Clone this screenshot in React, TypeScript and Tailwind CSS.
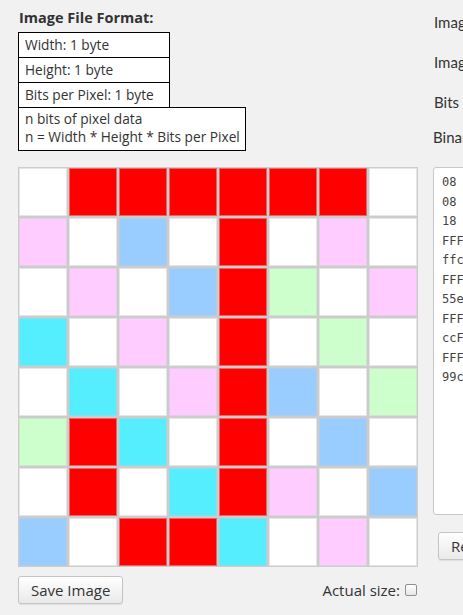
import React from "react";

type Cell = "W" | "R" | "P" | "B" | "C" | "G";

// pixel rows, as drawn in the editor
const rows: Cell[][] = [
  ["W", "R", "R", "R", "R", "R", "R", "W"],
  ["P", "W", "B", "W", "R", "W", "P", "W"],
  ["W", "P", "W", "B", "R", "G", "W", "P"],
  ["C", "W", "P", "W", "R", "W", "G", "W"],
  ["W", "C", "W", "P", "R", "B", "W", "G"],
  ["G", "R", "C", "W", "R", "W", "B", "W"],
  ["W", "R", "W", "C", "R", "P", "W", "B"],
  ["B", "W", "R", "R", "C", "W", "P", "W"],
];

const cellClass: Record<Cell, string> = {
  W: "bg-white",
  R: "bg-[#ff0000]",
  P: "bg-[#ffccff]",
  B: "bg-[#99ccff]",
  C: "bg-[#55eeff]",
  G: "bg-[#ccffcc]",
};

const hex: Record<Cell, string> = {
  W: "FFFFFF",
  R: "FF0000",
  P: "ffccff",
  B: "99ccff",
  C: "55eeff",
  G: "ccFFcc",
};

const binaryLines = ["08", "08", "18", ...rows.map((r) => r.map((c) => hex[c]).join(""))];

const formatRows = ["Width: 1 byte", "Height: 1 byte", "Bits per Pixel: 1 byte"];

const buttonClass =
  "h-[28px] rounded-[3px] border border-[#c4c4c4] bg-gradient-to-b from-white to-[#e9e9e9] px-[12px] text-[15px] text-[#333] shadow-[0_1px_1px_rgba(0,0,0,0.08)] whitespace-nowrap";

const App: React.FC = () => {
  return (
    <div
      className="w-[463px] h-[615px] overflow-hidden bg-[#f1f1f1] text-[#333]"
      style={{ fontFamily: "'Open Sans', Lato, sans-serif" }}
    >
      <div className="flex w-[800px] pl-[18px] pt-[9px]">
        {/* editor column */}
        <div className="w-[400px] flex-none">
          <h2 className="text-[14.5px] font-bold leading-[18px] pl-px">Image File Format:</h2>
          <div className="mt-[5px] flex flex-col items-start">
            {formatRows.map((label, i) => (
              <div
                key={label}
                className={`w-[152px] h-[26px] border border-black bg-white pl-[6px] text-[13.7px] leading-[24px] ${
                  i > 0 ? "-mt-px" : ""
                }`}
              >
                {label}
              </div>
            ))}
            <div className="-mt-px h-[44px] border border-black bg-white pl-[6px] pr-[5px] pt-[2px] text-[13.7px] leading-[18px]">
              <div>n bits of pixel data</div>
              <div>n = Width * Height * Bits per Pixel</div>
            </div>
          </div>

          <div className="mt-[16px] grid w-[400px] grid-cols-8 gap-[2px] bg-[#cccccc] p-px">
            {rows.flatMap((row, y) =>
              row.map((c, x) => (
                <div
                  key={`${y}-${x}`}
                  className={`h-[48px] w-[48px] border border-[#cccccc80] ${cellClass[c]}`}
                />
              )),
            )}
          </div>

          <div className="mt-[9px] flex items-center justify-between">
            <button className={buttonClass}>Save Image</button>
            <label className="mr-px flex items-center gap-[5px] text-[15px]">
              Actual size:
              <span className="h-[12px] w-[12px] rounded-[2px] border border-[#8f8f8f] bg-gradient-to-b from-white to-[#e6e6e6]" />
            </label>
          </div>
        </div>

        {/* data column */}
        <div className="ml-[15px] w-[300px] flex-none text-[15px]" style={{ fontFamily: "Lato, sans-serif" }}>
          <div className="h-[40px] pl-px leading-[26px]">Image Width:</div>
          <div className="h-[40px] pl-px leading-[26px]">Image Height:</div>
          <div className="h-[33px] pl-px leading-[26px]">Bits per Pixel:</div>
          <div className="h-[45px] pt-[2px] leading-[26px]">Binary Data:</div>
          <div
            className="h-[348px] w-[280px] overflow-hidden rounded-[3px] border border-[#c8c8c8] bg-white pl-[8px] pt-[5px] text-[12px] leading-[19.5px] text-[#444]"
            style={{ fontFamily: "'DejaVu Sans Mono', monospace" }}
          >
            {binaryLines.map((line, i) => (
              <div key={i} className="whitespace-nowrap">
                {line}
              </div>
            ))}
          </div>
          <button
            className={`mt-[17px] ml-[5px] ${buttonClass}`}
            style={{ fontFamily: "'Open Sans', sans-serif" }}
          >
            Render Image
          </button>
        </div>
      </div>
    </div>
  );
};

export default App;
